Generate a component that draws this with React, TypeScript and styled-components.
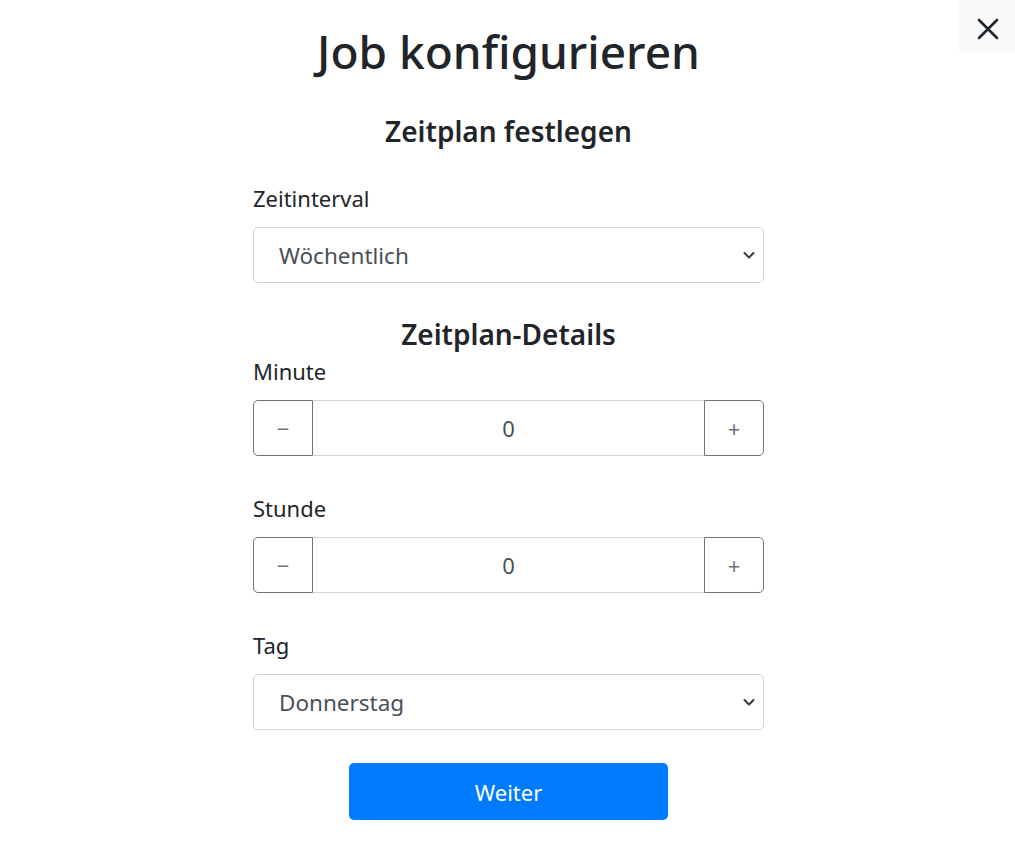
import React, { useState } from "react";
import styled, { createGlobalStyle } from "styled-components";

const Global = createGlobalStyle`
  html, body { margin: 0; padding: 0; background: #fff; }
  body { font-family: "Noto Sans", "Open Sans", sans-serif; color: #212529; }
  * { box-sizing: border-box; }
`;

const Page = styled.div`
  position: relative;
  width: 1015px;
  min-height: 841px;
`;

const CloseButton = styled.button`
  position: absolute;
  top: 0;
  right: 0;
  width: 57px;
  height: 52px;
  border: none;
  background: #f8f9fa;
  border-bottom-left-radius: 6px;
  display: flex;
  align-items: center;
  justify-content: center;
  padding: 6px 0 0 3px;
  cursor: pointer;
`;

const Form = styled.div`
  width: 511px;
  margin: 0 auto;
  padding-top: 21px;
  display: flex;
  flex-direction: column;
  position: relative;
  left: 1px;
`;

const Title = styled.h1`
  margin: 0;
  font-size: 46px;
  font-weight: 500;
  line-height: 60px;
  text-align: center;
  color: #212529;
`;

const SubTitle = styled.h4<{ $mt: number; $mb: number }>`
  margin: ${(p) => p.$mt}px 0 ${(p) => p.$mb}px;
  font-size: 28px;
  font-weight: 600;
  line-height: 36px;
  text-align: center;
  color: #212529;
`;

const Group = styled.div<{ $mb: number }>`
  display: flex;
  flex-direction: column;
  margin-bottom: ${(p) => p.$mb}px;
`;

const Label = styled.label`
  font-size: 22px;
  line-height: 30px;
  margin-bottom: 14px;
  color: #212529;
`;

const SelectWrap = styled.div`
  position: relative;
  height: 56px;
  border: 1px solid #ced4da;
  border-radius: 5px;
  display: flex;
  align-items: center;
  padding: 0 25px;
  font-size: 22.5px;
  color: #495057;
`;

const Chevron = styled.svg`
  position: absolute;
  right: 8px;
  top: 50%;
  margin-top: -5px;
`;

const Stepper = styled.div`
  display: flex;
  height: 56px;
`;

const StepButton = styled.button<{ $side: "left" | "right" }>`
  width: 60px;
  height: 100%;
  background: #fff;
  border: 1px solid #6c757d;
  border-radius: ${(p) => (p.$side === "left" ? "5px 0 0 5px" : "0 5px 5px 0")};
  color: #6c757d;
  font-family: "Noto Sans", sans-serif;
  font-size: 22px;
  display: flex;
  align-items: center;
  justify-content: center;
  padding: 0;
  cursor: pointer;
`;

const StepValue = styled.div`
  flex: 1;
  border-top: 1px solid #ced4da;
  border-bottom: 1px solid #ced4da;
  display: flex;
  align-items: center;
  justify-content: center;
  font-size: 22px;
  color: #495057;
`;

const Submit = styled.button`
  align-self: center;
  width: 319px;
  height: 57px;
  margin-top: 33px;
  border: none;
  border-radius: 5px;
  background: #007bff;
  color: #fff;
  font-family: "Noto Sans", sans-serif;
  font-size: 22px;
  cursor: pointer;
`;

const ChevronIcon = () => (
  <Chevron width="12" height="10" viewBox="0 0 12 10">
    <path d="M1.5 3 L6 7.5 L10.5 3" fill="none" stroke="#343a40" strokeWidth="2" strokeLinecap="round" strokeLinejoin="round" />
  </Chevron>
);

const Select = ({ value }: { value: string }) => (
  <SelectWrap>
    {value}
    <ChevronIcon />
  </SelectWrap>
);

const NumberStepper = ({ initial }: { initial: number }) => {
  const [v, setV] = useState(initial);
  return (
    <Stepper>
      <StepButton $side="left" onClick={() => setV(v - 1)}>−</StepButton>
      <StepValue>{v}</StepValue>
      <StepButton $side="right" onClick={() => setV(v + 1)}>+</StepButton>
    </Stepper>
  );
};

export default function App() {
  return (
    <Page>
      <Global />
      <CloseButton aria-label="Schließen">
        <svg width="22" height="22" viewBox="0 0 22 22">
          <path d="M2 2 L20 20 M20 2 L2 20" stroke="#212529" strokeWidth="2.6" strokeLinecap="round" />
        </svg>
      </CloseButton>
      <Form>
        <Title>Job konfigurieren</Title>
        <SubTitle $mt={32} $mb={34}>Zeitplan festlegen</SubTitle>
        <Group $mb={33}>
          <Label>Zeitinterval</Label>
          <Select value="Wöchentlich" />
        </Group>
        <SubTitle $mt={0} $mb={4}>Zeitplan-Details</SubTitle>
        <Group $mb={37}>
          <Label>Minute</Label>
          <NumberStepper initial={0} />
        </Group>
        <Group $mb={37}>
          <Label>Stunde</Label>
          <NumberStepper initial={0} />
        </Group>
        <Group $mb={0}>
          <Label>Tag</Label>
          <Select value="Donnerstag" />
        </Group>
        <Submit>Weiter</Submit>
      </Form>
    </Page>
  );
}
